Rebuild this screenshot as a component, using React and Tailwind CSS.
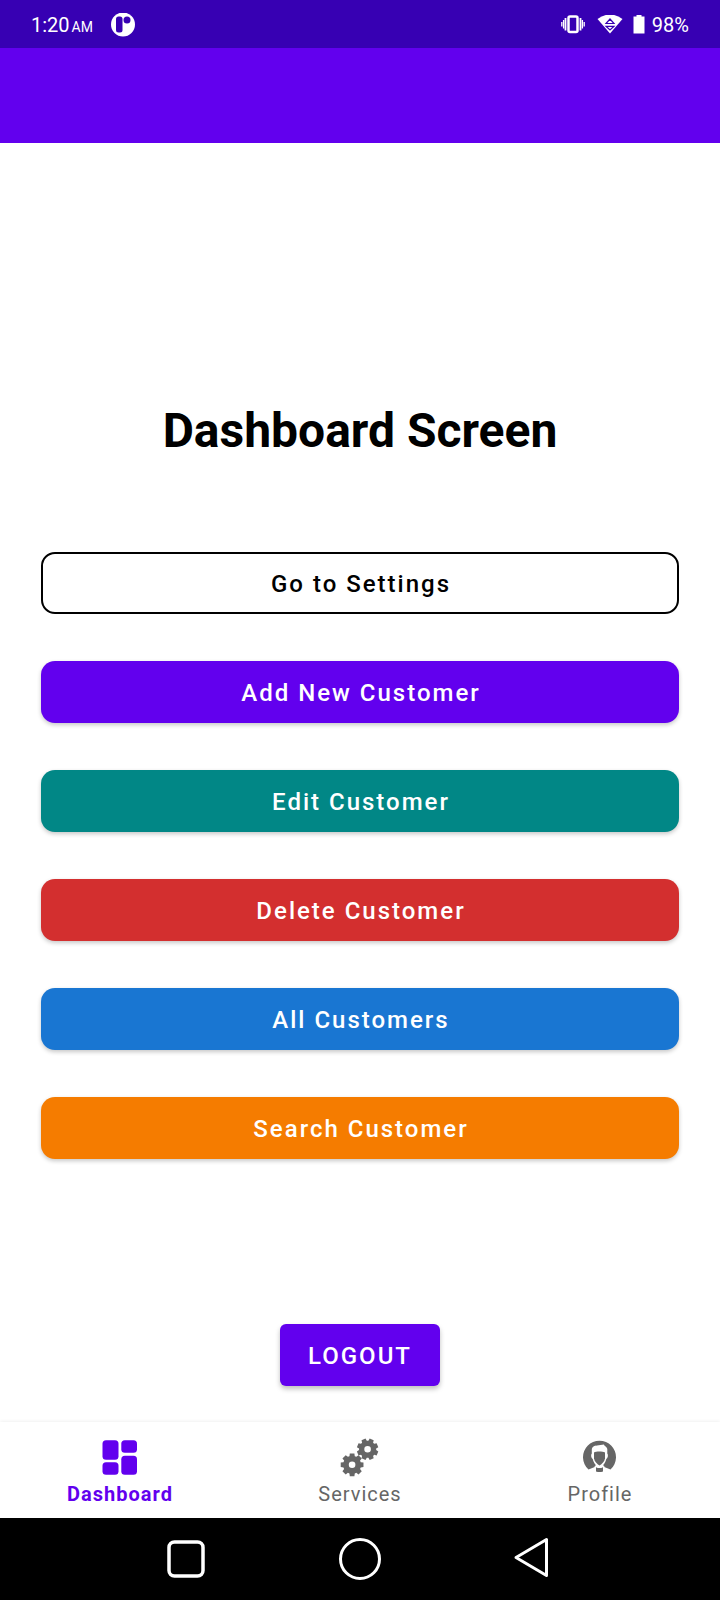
import React from "react";

const ACTIONS = [
  { label: "Go to Settings", style: "border-2 border-black bg-white text-black" },
  { label: "Add New Customer", style: "bg-[#6200ee] text-white shadow-[0_2px_4px_rgba(0,0,0,0.22)]" },
  { label: "Edit Customer", style: "bg-[#018786] text-white shadow-[0_2px_4px_rgba(0,0,0,0.22)]" },
  { label: "Delete Customer", style: "bg-[#d32f2f] text-white shadow-[0_2px_4px_rgba(0,0,0,0.22)]" },
  { label: "All Customers", style: "bg-[#1976d2] text-white shadow-[0_2px_4px_rgba(0,0,0,0.22)]" },
  { label: "Search Customer", style: "bg-[#f57c00] text-white shadow-[0_2px_4px_rgba(0,0,0,0.22)]" },
];

function gearPath(cx, cy, outer, inner, hole, turn) {
  const teeth = 8;
  const step = (Math.PI * 2) / teeth;
  const points = [];
  for (let i = 0; i < teeth; i += 1) {
    const a = turn + i * step;
    [
      [inner, -0.3],
      [outer, -0.2],
      [outer, 0.2],
      [inner, 0.3],
    ].forEach(([r, d]) => {
      points.push(`${(cx + r * Math.cos(a + d)).toFixed(2)} ${(cy + r * Math.sin(a + d)).toFixed(2)}`);
    });
  }
  return `M${points.join("L")}ZM${cx + hole} ${cy}a${hole} ${hole} 0 1 0 ${-2 * hole} 0a${hole} ${hole} 0 1 0 ${2 * hole} 0Z`;
}

function DashboardIcon() {
  return (
    <svg viewBox="0 0 40 40" className="size-10" fill="currentColor" aria-hidden="true">
      <rect x="2.5" y="2.3" width="16" height="19.5" rx="3.5" />
      <rect x="21.3" y="2.3" width="15.7" height="12.5" rx="3.5" />
      <rect x="2.5" y="24.2" width="16" height="12.5" rx="3.5" />
      <rect x="21.3" y="17.700" width="15.7" height="19" rx="3.5" />
    </svg>
  );
}

function ServicesIcon() {
  return (
    <svg viewBox="0 0 40 40" className="size-10" fill="currentColor" fillRule="evenodd" aria-hidden="true">
      <path d={gearPath(12.1, 26.8, 11.6, 9, 3.3, 0)} />
      <path d={gearPath(27.6, 11.3, 10.9, 8.6, 3.3, Math.PI / 8)} />
    </svg>
  );
}

function ProfileIcon() {
  return (
    <svg viewBox="0 0 40 40" className="size-10" aria-hidden="true">
      <path fill="currentColor" d="M8.500 31.500A16.500 16.500 0 1 1 30.500 31.500L23 28.500H16Z" />
      <path fill="white" d="M11.800 15.500V11.500C12 8.500 14.500 7.800 17 7.500L24 6.500C24 8 26.500 8 27.300 11V15.500C28.600 17 27.800 20 26.300 21C25.500 24 24.500 25.500 23.500 26.500V28L25 29 20 31H19L14 29 15.500 28V26.500C14.500 25.500 13.500 24 12.700 21C11.200 20 10.500 17 11.800 15.500Z" />
      <path fill="currentColor" d="M14 14.500C16 13.300 22.500 13.300 25 14.500V20.500C24.500 23.500 22 26 19.500 27.600C17 26 14.500 23.500 14 20.500Z" />
      <path fill="currentColor" d="M16 29.200Q19.500 31 23 29.200V33.500Q19.500 34.500 16 33.500Z" />
    </svg>
  );
}

const TABS = [
  { label: "Dashboard", Icon: DashboardIcon, style: "font-bold text-[#6200ee]" },
  { label: "Services", Icon: ServicesIcon, style: "text-[#666666]" },
  { label: "Profile", Icon: ProfileIcon, style: "text-[#666666]" },
];

function StatusBar() {
  return (
    <div className="flex h-12 items-center justify-between bg-[#3700b3] px-[31px] pt-0.5 text-white">
      <div className="flex items-center">
        <span className="text-xl leading-6">1:20</span>
        <span className="ml-0.5 pt-1 text-sm leading-5">AM</span>
        <svg viewBox="0 0 24 24" className="ml-[18px] size-6" aria-hidden="true">
          <circle cx="12" cy="11.5" r="12" fill="white" />
          <rect x="5" y="3.500" width="6.500" height="16" rx="2.500" fill="#3700b3" />
          <circle cx="16" cy="7" r="3.500" fill="#3700b3" />
        </svg>
      </div>
      <div className="flex items-center">
        <svg viewBox="0 0 24 20" className="h-5 w-6" fill="none" stroke="white" aria-hidden="true">
          <rect x="7.500" y="1.500" width="9" height="15.500" rx="1.500" strokeWidth="2.500" />
          <path d="M4.500 3v12.500M19.500 3v12.500" strokeWidth="1.800" />
          <path d="M0.800 7v4.500M23.200 7v4.500M2.600 5v8.500M21.400 5v8.500" strokeWidth="1.300" />
        </svg>
        <svg viewBox="0 0 26 20" className="ml-3 h-5 w-[26px]" aria-hidden="true">
          <path d="M0.500 4Q13 -5 25.500 4L13 18.500Z" fill="white" />
          <path d="M9 8.500 13 4 17 8.500ZM9 11.300 13 15 17 11.300Z" fill="white" stroke="#3700b3" strokeWidth="1.200" />
        </svg>
        <svg viewBox="0 0 12 20" className="ml-2.5 h-5 w-3" fill="white" aria-hidden="true">
          <path d="M3.500 0H8.500V1.500H11.500V18.500H0.500V1.500h3Z" />
        </svg>
        <span className="ml-[7px] text-xl leading-6">98%</span>
      </div>
    </div>
  );
}

function SystemNavigation() {
  return (
    <div className="flex h-[82px] items-center justify-center gap-[130px] bg-black text-white">
      <button type="button" aria-label="Recent apps">
        <svg viewBox="0 0 44 44" className="size-11" fill="none" stroke="currentColor" strokeWidth="3.5" aria-hidden="true">
          <rect x="5" y="5" width="34" height="34" rx="5.500" />
        </svg>
      </button>
      <button type="button" aria-label="Home">
        <svg viewBox="0 0 44 44" className="size-11" fill="none" stroke="currentColor" strokeWidth="3" aria-hidden="true">
          <circle cx="22" cy="22" r="19.500" />
        </svg>
      </button>
      <button type="button" aria-label="Back">
        <svg viewBox="0 0 44 44" className="size-11" fill="none" stroke="currentColor" strokeWidth="3" strokeLinejoin="round" aria-hidden="true">
          <path d="M34.500 2.500V38.500L4 20.500Z" />
        </svg>
      </button>
    </div>
  );
}

export default function App() {
  return (
    <div className="flex min-h-screen flex-col bg-white font-[Roboto,sans-serif]">
      <StatusBar />
      <header className="h-[95px] bg-[#6200ee]" />
      <main className="flex flex-1 flex-col items-center px-[41px] pt-[260px] pb-9">
        <h1 className="text-5xl leading-[56px] font-bold text-black">Dashboard Screen</h1>
        <div className="mt-[93px] flex w-full flex-col gap-[47px]">
          {ACTIONS.map(({ label, style }) => (
            <button key={label} type="button" className={`h-[62px] rounded-[14px] pt-0.5 pl-0.5 text-2xl font-medium tracking-[2px] ${style}`}>
              {label}
            </button>
          ))}
        </div>
        <button
          type="button"
          className="mt-auto h-[62px] rounded-md bg-[#6200ee] px-7 pt-0.5 text-2xl font-medium tracking-[2px] text-white shadow-[0_3px_5px_rgba(0,0,0,0.25)]"
        >
          LOGOUT
        </button>
      </main>
      <nav className="grid h-24 grid-cols-3 bg-white shadow-[0_-1px_3px_rgba(0,0,0,0.06)]">
        {TABS.map(({ label, Icon, style }) => (
          <a key={label} href="#" className={`flex flex-col items-center pt-4 text-xl leading-6 tracking-[1px] ${style}`}>
            <Icon />
            <span className="mt-1">{label}</span>
          </a>
        ))}
      </nav>
      <SystemNavigation />
    </div>
  );
}
